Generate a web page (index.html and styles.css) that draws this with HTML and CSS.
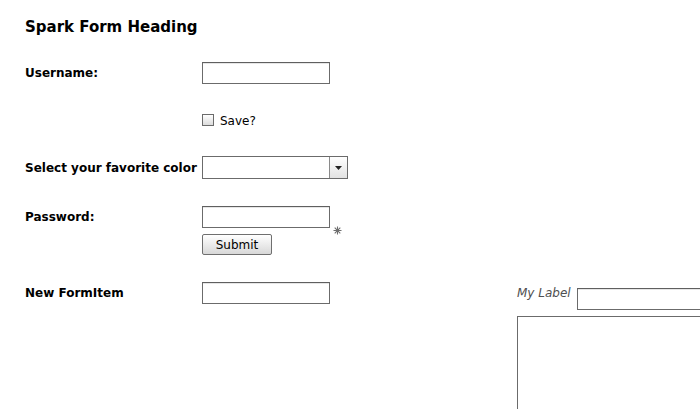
FILE: index.html
```html
<!DOCTYPE html>
<html>
<head>
<meta charset="utf-8">
<link rel="stylesheet" href="styles.css">
</head>
<body>
<div class="page">
  <h1 class="heading">Spark Form Heading</h1>
  <div class="form">
    <div class="row row-user">
      <label class="label">Username:</label>
      <input class="text-input" type="text">
    </div>
    <div class="row row-save">
      <span class="label"></span>
      <label class="check"><span class="check-box"></span><span class="check-text">Save?</span></label>
    </div>
    <div class="row row-color">
      <label class="label">Select your favorite color</label>
      <div class="select">
        <span class="select-value"></span>
        <span class="select-btn"><svg width="7" height="4" viewBox="0 0 7 4"><path d="M0 0H7L3.5 4Z" fill="#222"/></svg></span>
      </div>
    </div>
    <div class="row row-pass">
      <label class="label">Password:</label>
      <div class="pass-group">
        <div class="pass-stack">
          <input class="text-input" type="password">
          <button class="btn" type="button">Submit</button>
        </div>
        <svg class="required" width="9" height="9" viewBox="0 0 9 9">
          <g stroke="#6e6e6e" stroke-width="1.1">
            <path d="M4.5 0.5V8.5M0.5 4.5H8.5M1.7 1.7L7.3 7.3M7.3 1.7L1.7 7.3"/>
          </g>
          <circle cx="4.5" cy="4.5" r="1.5" fill="#6e6e6e"/>
        </svg>
      </div>
    </div>
    <div class="bottom">
      <div class="row row-new">
        <label class="label">New FormItem</label>
        <input class="text-input" type="text">
      </div>
      <div class="side">
        <div class="side-row">
          <span class="side-label">My Label</span>
          <input class="text-input wide" type="text">
        </div>
        <textarea class="area"></textarea>
      </div>
    </div>
  </div>
</div>
</body>
</html>
```

FILE: styles.css
```css
html, body {
  margin: 0;
  padding: 0;
  background: #fff;
  overflow: hidden;
}
body {
  width: 700px;
  height: 409px;
  font-family: "DejaVu Sans", "Liberation Sans", sans-serif;
  color: #000;
}
.page {
  padding: 18px 0 0 25px;
}
.heading {
  margin: 0;
  font-size: 15px;
  font-weight: bold;
  line-height: 18px;
}
.form {
  display: flex;
  flex-direction: column;
}
.row {
  display: flex;
  align-items: flex-start;
}
.label {
  width: 177px;
  flex: none;
  font-size: 12px;
  font-weight: bold;
  line-height: 14px;
  padding-top: 4px;
}
.text-input {
  box-sizing: border-box;
  width: 128px;
  height: 22px;
  margin: 0;
  padding: 0 3px;
  border: 1px solid #6b6b6b;
  border-top-color: #5f5f5f;
  background: #fff;
  box-shadow: inset 0 1px 0 #e6e6e6;
  outline: none;
  font: 12px "DejaVu Sans", sans-serif;
}
.row-user { margin-top: 26px; }
.row-save { margin-top: 30px; }
.row-color { margin-top: 28px; }
.row-pass { margin-top: 27px; }
.row-color .label { padding-top: 5px; }

.check {
  display: flex;
  align-items: flex-start;
  gap: 6px;
  font-size: 12px;
  line-height: 14px;
}
.row-save .label { padding-top: 0; }
.check-box {
  box-sizing: border-box;
  width: 12px;
  height: 12px;
  border: 1px solid #6b6b6b;
  background: linear-gradient(#ffffff, #dcdcdc);
}

.select {
  box-sizing: border-box;
  width: 146px;
  height: 23px;
  display: flex;
  border: 1px solid #6b6b6b;
  background: #fff;
}
.select-value { flex: 1; }
.select-btn {
  width: 17px;
  border-left: 1px solid #8a8a8a;
  background: linear-gradient(#ffffff, #e2e2e2);
  display: flex;
  align-items: center;
  justify-content: center;
}

.pass-group {
  display: flex;
  align-items: center;
  gap: 3px;
}
.pass-stack {
  display: flex;
  flex-direction: column;
  align-items: flex-start;
  gap: 6px;
}
.btn {
  box-sizing: border-box;
  width: 70px;
  height: 21px;
  margin: 0;
  padding: 0;
  border: 1px solid #6f6f6f;
  border-radius: 2px;
  background: linear-gradient(#ffffff, #d8d8d8);
  font: 12px "DejaVu Sans", sans-serif;
  color: #000;
}

.bottom {
  display: flex;
  margin-top: 27px;
}
.row-new {
  width: 492px;
  flex: none;
}
.side {
  display: flex;
  flex-direction: column;
  gap: 6px;
  margin-top: 6px;
}
.side-row {
  display: flex;
  align-items: flex-start;
  gap: 6px;
}
.side-label {
  font-size: 12px;
  font-style: italic;
  color: #505050;
  line-height: 14px;
  margin-top: -2px;
}
.text-input.wide { width: 160px; }
.area {
  box-sizing: border-box;
  width: 250px;
  height: 120px;
  margin: 0;
  border: 1px solid #6b6b6b;
  resize: none;
  outline: none;
  padding: 0;
}
```
